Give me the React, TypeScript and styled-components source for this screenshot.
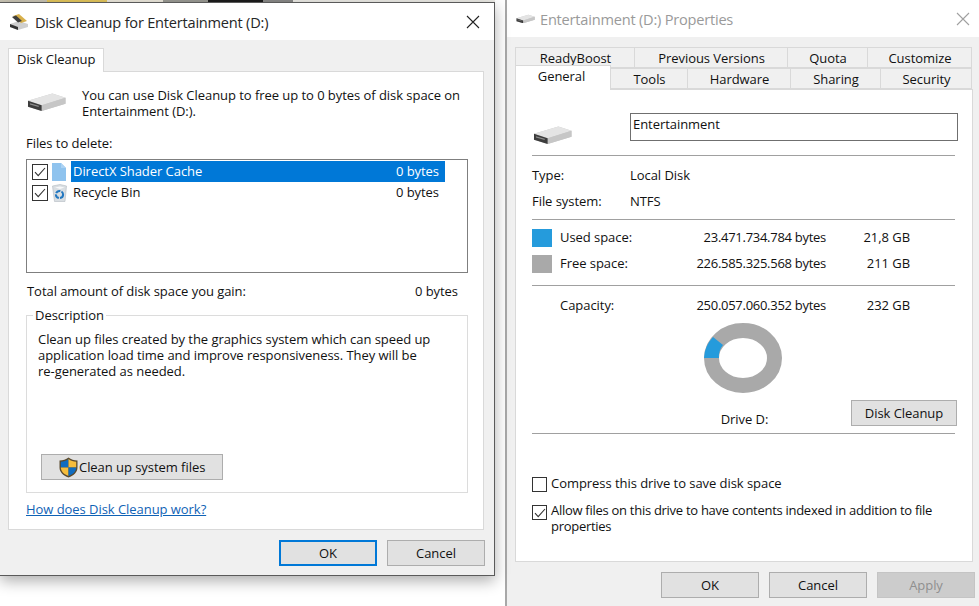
import React from "react";
import styled, { createGlobalStyle } from "styled-components";

const GlobalStyle = createGlobalStyle`
  html, body { margin: 0; padding: 0; background: #fff; }
  body {
    width: 979px;
    height: 606px;
    overflow: hidden;
    font-family: "Open Sans", "Noto Sans", sans-serif;
    font-size: 13px;
    letter-spacing: -0.05px;
    line-height: 16px;
    color: #111;
  }
`;

const Desktop = styled.div`
  position: relative;
  width: 979px;
  height: 606px;
  background: #fff;
  overflow: hidden;
`;

// strip of the wallpaper that shows above the front window
const Wallpaper = styled.div`
  height: 2px;
  width: 495px;
  background: linear-gradient(90deg, #c9c4b4 0 47px, #e4c65c 47px 107px, #ece8dc 107px 163px, #9b9b94 163px 208px, #1c1c1c 208px 263px, #8a8a88 263px 293px, #ecebe6 293px 495px);
`;

// windows sit on a free canvas, so these two are placed absolutely
const FrontWindow = styled.section`
  position: absolute;
  left: 0;
  top: 2px;
  width: 495px;
  height: 574px;
  box-sizing: border-box;
  display: flex;
  flex-direction: column;
  background: #f0f0f0;
  border: 1px solid #5a5a5a;
  border-left: 0;
  box-shadow: 0 5px 14px rgba(0, 0, 0, 0.32);
`;

const BackWindow = styled.section`
  position: absolute;
  left: 505px;
  top: 0;
  width: 474px;
  height: 606px;
  box-sizing: border-box;
  display: flex;
  flex-direction: column;
  background: #f0f0f0;
  border-left: 2px solid #a8a8a8;
`;

const TitleBar = styled.header<{ $pad: number }>`
  height: 37px;
  flex: none;
  display: flex;
  align-items: center;
  padding: 0 ${p => p.$pad}px 0 9px;
  background: #fff;
`;

const TitleText = styled.h1<{ $dim?: boolean }>`
  flex: 1;
  margin: 0;
  font-size: 14.6px;
  font-weight: 400;
  letter-spacing: -0.22px;
  color: ${p => (p.$dim ? "#9a9a9a" : "#262626")};
`;

const TitleIcon = styled.span<{ $gap: number }>`
  display: flex;
  margin-right: ${p => p.$gap}px;
`;

const CloseGlyph = styled.svg<{ $dim?: boolean }>`
  width: 14px;
  height: 14px;
  stroke: ${p => (p.$dim ? "#a0a0a0" : "#222")};
  stroke-width: 1.1;
  fill: none;
`;

const FrontBody = styled.div`
  flex: 1;
  display: flex;
  flex-direction: column;
  padding: 8px 9px 8px 8px;
`;

const SingleTab = styled.div`
  box-sizing: border-box;
  width: 96px;
  height: 24px;
  margin-bottom: -1px;
  padding-left: 8px;
  line-height: 20px;
  position: relative;
  z-index: 1;
  background: #fff;
  border: 1px solid #d9d9d9;
  border-bottom: 0;
`;

const Panel = styled.div`
  box-sizing: border-box;
  width: 476px;
  height: 459px;
  padding: 0 15px 0 17px;
  display: flex;
  flex-direction: column;
  background: #fff;
  border: 1px solid #d9d9d9;
`;

const IntroRow = styled.div`
  display: flex;
  align-items: flex-start;
  margin-top: 15px;
  height: 33px;
`;

const IntroIcon = styled.div`
  width: 56px;
  padding: 5px 0 0 1px;
  box-sizing: border-box;
  flex: none;
`;

const IntroCopy = styled.p`
  margin: 0;
  width: 390px;
`;

const Label = styled.div`
  margin-top: 15px;
  height: 16px;
`;

const FileList = styled.div`
  box-sizing: border-box;
  width: 442px;
  height: 114px;
  margin-top: 8px;
  padding: 1px 5px;
  border: 1px solid #7f7f7f;
`;

const FileRow = styled.div`
  display: flex;
  align-items: center;
  height: 21px;
`;

const FileIconSlot = styled.span`
  width: 23px;
  flex: none;
  display: flex;
  justify-content: center;
  padding-right: 1px;
  box-sizing: border-box;
`;

const FileText = styled.div<{ $on?: boolean }>`
  box-sizing: border-box;
  width: 374px;
  height: 21px;
  display: flex;
  justify-content: space-between;
  align-items: center;
  padding: 0 6px 2px 2px;
  background: ${p => (p.$on ? "#0078d7" : "transparent")};
  color: ${p => (p.$on ? "#fff" : "#111")};
`;

const Box = styled.span`
  box-sizing: border-box;
  width: 16px;
  height: 16px;
  flex: none;
  display: flex;
  align-items: center;
  justify-content: center;
  background: #fff;
  border: 1px solid #333;
`;

const OptionBox = styled(Box)<{ $top: number }>`
  width: 15px;
  height: 15px;
  margin-top: ${p => p.$top}px;
`;

const TotalRow = styled.div`
  display: flex;
  justify-content: space-between;
  width: 431px;
  margin: 10px 0 0 1px;
`;

const DescriptionBox = styled.fieldset`
  box-sizing: border-box;
  width: 442px;
  height: 186px;
  margin: 8px 0 0;
  padding: 8px 11px 0;
  min-width: 0;
  display: flex;
  flex-direction: column;
  border: 1px solid #dcdcdc;
`;

const Legend = styled.legend`
  margin: 0 auto 0 -5px;
  padding: 0 2px;
`;

const DescriptionCopy = styled.p`
  margin: 0;
  width: 394px;
  height: 123px;
`;

const WinButton = styled.button<{ $w: number; $off?: boolean; $focus?: boolean }>`
  box-sizing: border-box;
  width: ${p => p.$w}px;
  height: 26px;
  flex: none;
  padding: 0;
  display: inline-flex;
  align-items: center;
  justify-content: center;
  font: inherit;
  letter-spacing: inherit;
  color: ${p => (p.$off ? "#8f8f8f" : "#111")};
  background: ${p => (p.$off ? "#cccccc" : "#e1e1e1")};
  border: ${p => (p.$focus ? "2px solid #0078d7" : p.$off ? "1px solid #c4c4c4" : "1px solid #adadad")};
`;

const SystemButton = styled(WinButton)`
  justify-content: flex-start;
  padding-left: 17px;
  gap: 1px;
  margin-left: 3px;
`;

const HelpLink = styled.a`
  margin-top: 8px;
  color: #0f62b5;
  text-decoration: underline;
`;

const ButtonRow = styled.footer<{ $pr: number }>`
  display: flex;
  justify-content: flex-end;
  gap: 10px;
  padding: 10px ${p => p.$pr}px 0 0;
`;

const TabRows = styled.div`
  margin: 10px 0 0 8px;
  display: flex;
  flex-direction: column;
  width: 457px;
`;

const TabLine = styled.div`
  display: flex;
  height: 21px;
`;

const PropTab = styled.div<{ $w: number; $active?: boolean; $first?: boolean }>`
  box-sizing: border-box;
  width: ${p => p.$w}px;
  padding-left: 1px;
  text-align: center;
  line-height: ${p => (p.$active ? "20px" : "21px")};
  background: ${p => (p.$active ? "#fff" : "#f0f0f0")};
  border: 1px solid #d9d9d9;
  border-left-width: ${p => (p.$active || p.$first ? 1 : 0)}px;
  border-bottom: ${p => (p.$active ? "0" : "1px solid #d9d9d9")};
  ${p => p.$active && "height: 25px; margin-top: -3px; position: relative; z-index: 1; padding-right: 4px;"}
`;

const PropPanel = styled.div`
  box-sizing: border-box;
  width: 458px;
  height: 473px;
  margin: 0 0 0 8px;
  padding: 0 15px 0 16px;
  display: flex;
  flex-direction: column;
  background: #fff;
  border: 1px solid #d9d9d9;
`;

const NameRow = styled.div`
  display: flex;
  align-items: flex-start;
  height: 66px;
  padding-top: 23px;
  box-sizing: border-box;
  border-bottom: 1px solid #a0a0a0;
  width: 423px;
`;

const NameIcon = styled.div`
  width: 98px;
  flex: none;
  padding: 12px 0 0 1px;
  box-sizing: border-box;
`;

const NameInput = styled.div`
  box-sizing: border-box;
  width: 328px;
  height: 28px;
  flex: none;
  padding: 2px 0 0 2px;
  border: 1px solid #6f6f6f;
`;

const InfoBlock = styled.dl`
  margin: 0;
  height: 64px;
  padding-top: 6px;
  box-sizing: border-box;
  width: 423px;
  border-bottom: 1px solid #a0a0a0;
`;

const InfoRow = styled.div`
  display: grid;
  grid-template-columns: 98px 1fr;
  height: 26px;
  align-items: center;
`;

const InfoTerm = styled.dt`
  margin: 0;
`;

const InfoValue = styled.dd`
  margin: 0;
`;

const SpaceBlock = styled.div`
  box-sizing: border-box;
  width: 423px;
  height: 66px;
  padding-top: 4px;
  border-bottom: 1px solid #a0a0a0;
`;

const SpaceRow = styled.div`
  display: grid;
  grid-template-columns: 28px 128px 138px 84px;
  height: 26px;
  align-items: center;
`;

const Swatch = styled.span<{ $c: string }>`
  width: 20px;
  height: 18px;
  margin-top: 2px;
  background: ${p => p.$c};
`;

const Num = styled.span<{ $tight?: boolean }>`
  text-align: right;
  white-space: nowrap;
  letter-spacing: ${p => (p.$tight ? "-0.28px" : "inherit")};
`;

const CapacityBlock = styled.div`
  box-sizing: border-box;
  width: 423px;
  height: 148px;
  padding-top: 6px;
  border-bottom: 1px solid #a0a0a0;
  display: flex;
  flex-direction: column;
`;

const ChartRow = styled.div`
  display: grid;
  grid-template-columns: 172px 78px 1fr;
  margin-top: 5px;
`;

const ChartCell = styled.div`
  grid-column: 2;
  display: flex;
  flex-direction: column;
  align-items: center;
`;

const DriveCaption = styled.span`
  margin: 18px 0 0 3px;
  white-space: nowrap;
`;

const CleanupCell = styled.div`
  display: flex;
  justify-content: flex-end;
  align-items: flex-end;
  margin-right: -2px;
  padding-bottom: 1px;
`;

const OptionList = styled.div`
  display: flex;
  flex-direction: column;
  gap: 10px;
  margin-top: 41px;
`;

const Option = styled.label`
  display: flex;
  align-items: flex-start;
  gap: 4px;
  width: 420px;
`;

const OptionText = styled.span<{ $tight?: boolean }>`
  flex: 1;
  letter-spacing: ${p => (p.$tight ? "-0.28px" : "inherit")};
`;

const IconSvg = styled.svg`
  display: block;
`;

const Check = () => (
  <svg width="12" height="10" viewBox="0 0 12 10" fill="none" stroke="#333" strokeWidth="1.1">
    <path d="M1 5.2 4.2 8.6 11 1" />
  </svg>
);

const Close = ({ dim }: { dim?: boolean }) => (
  <CloseGlyph $dim={dim} viewBox="0 0 14 14">
    <path d="M1 1 13 13M13 1 1 13" />
  </CloseGlyph>
);

const DriveIcon = ({ w = 39 }: { w?: number }) => (
  <IconSvg width={w} height={w * 0.5} viewBox="0 0 40 20">
    <path d="M1 9 26 1.5 39.5 6 39.5 12 15 19.5 1 15z" fill="#c9c9c9" />
    <path d="M1 9 26 1.5 39.5 6 15 13.5z" fill="#e4e4e4" />
    <path d="M15 13.5 39.5 6 39.5 12 15 19.5z" fill="#c6c6c6" />
    <path d="M1 9 15 13.5 15 19.5 1 15z" fill="#3c3c3c" />
    <path d="M3 11.5 12 14.2 12 15.5 3 12.8z" fill="#8d8d8d" />
  </IconSvg>
);

const CleanupIcon = () => (
  <IconSvg width="20" height="18" viewBox="0 0 20 18">
    <path d="M1 11 10 8 19 11 19 14 9 17 1 14z" fill="#cfcfcf" />
    <path d="M1 11 9 14 9 17 1 14z" fill="#333" />
    <path d="M4 3 10 1 18 8 12 10z" fill="#d8b04a" />
    <path d="M3 4 7 2.5 13 8 9 9.5z" fill="#3d3d3d" />
  </IconSvg>
);

const FileIcon = () => (
  <svg width="14" height="18" viewBox="0 0 14 18">
    <path d="M0 0H9L14 5V18H0z" fill="#8fc3ee" />
    <path d="M9 0 14 5H9z" fill="#abd2f3" />
  </svg>
);

const BinIcon = () => (
  <svg width="15" height="18" viewBox="0 0 15 18">
    <path d="M0.5 2 8 0.5 14.5 2 13 17.5H2.5z" fill="#d9dee2" stroke="#b4bbc1" strokeWidth="0.6" />
    <path d="M3 3.5 8 2.5 12.5 3.5 8 5z" fill="#f7f8f9" />
    <circle cx="7.5" cy="10.5" r="3.6" fill="none" stroke="#2277c0" strokeWidth="2" strokeDasharray="5 1.2" />
  </svg>
);

const ShieldIcon = () => (
  <svg width="19" height="21" viewBox="0 0 19 21">
    <path d="M9.5 0.5C12 2.6 15 3.5 18.5 3.6V10.5C18.5 15 15 18.5 9.5 20.5 4 18.5 0.5 15 0.5 10.5V3.6C4 3.5 7 2.6 9.5 0.5z" fill="#5b4a2e" />
    <path d="M9.5 2C7.2 3.8 4.5 4.6 1.8 4.8V10.5H9.5z" fill="#0f6cc0" />
    <path d="M9.5 2V10.5H17.2V4.8C14.5 4.6 11.8 3.8 9.5 2z" fill="#f6bd3c" />
    <path d="M1.8 10.5C2 14.5 5 17.4 9.5 19V10.5z" fill="#f6bd3c" />
    <path d="M9.5 10.5V19C14 17.4 17 14.5 17.2 10.5z" fill="#0f6cc0" />
  </svg>
);

// used share drawn as one wedge of the flattened ring
const DonutChart = () => (
  <IconSvg width="78" height="70" viewBox="0 0 78 70">
    <ellipse cx="39" cy="35" rx="31.5" ry="27.5" fill="none" stroke="#a9a9a9" strokeWidth="15" />
    <path d="M0 35A39 35 0 0 1 9 14L19 22A24 20 0 0 0 15 35z" fill="#259bdc" />
  </IconSvg>
);

export default function App() {
  return (
    <Desktop>
      <GlobalStyle />
      <Wallpaper />

      <BackWindow>
        <TitleBar $pad={9}>
          <TitleIcon $gap={5}>
            <DriveIcon w={19} />
          </TitleIcon>
          <TitleText $dim>Entertainment (D:) Properties</TitleText>
          <Close dim />
        </TitleBar>
        <TabRows>
          <TabLine>
            <PropTab $w={120} $first>ReadyBoost</PropTab>
            <PropTab $w={153}>Previous Versions</PropTab>
            <PropTab $w={80}>Quota</PropTab>
            <PropTab $w={104}>Customize</PropTab>
          </TabLine>
          <TabLine>
            <PropTab $w={96} $active>General</PropTab>
            <PropTab $w={77}>Tools</PropTab>
            <PropTab $w={103}>Hardware</PropTab>
            <PropTab $w={90}>Sharing</PropTab>
            <PropTab $w={91}>Security</PropTab>
          </TabLine>
        </TabRows>
        <PropPanel>
          <NameRow>
            <NameIcon>
              <DriveIcon />
            </NameIcon>
            <NameInput>Entertainment</NameInput>
          </NameRow>
          <InfoBlock>
            <InfoRow>
              <InfoTerm>Type:</InfoTerm>
              <InfoValue>Local Disk</InfoValue>
            </InfoRow>
            <InfoRow>
              <InfoTerm>File system:</InfoTerm>
              <InfoValue>NTFS</InfoValue>
            </InfoRow>
          </InfoBlock>
          <SpaceBlock>
            <SpaceRow>
              <Swatch $c="#259bdc" />
              <span>Used space:</span>
              <Num $tight>23.471.734.784 bytes</Num>
              <Num>21,8 GB</Num>
            </SpaceRow>
            <SpaceRow>
              <Swatch $c="#a9a9a9" />
              <span>Free space:</span>
              <Num $tight>226.585.325.568 bytes</Num>
              <Num>211 GB</Num>
            </SpaceRow>
          </SpaceBlock>
          <CapacityBlock>
            <SpaceRow>
              <span />
              <span>Capacity:</span>
              <Num $tight>250.057.060.352 bytes</Num>
              <Num>232 GB</Num>
            </SpaceRow>
            <ChartRow>
              <span />
              <ChartCell>
                <DonutChart />
                <DriveCaption>Drive D:</DriveCaption>
              </ChartCell>
              <CleanupCell>
                <WinButton $w={106}>Disk Cleanup</WinButton>
              </CleanupCell>
            </ChartRow>
          </CapacityBlock>
          <OptionList>
            <Option>
              <OptionBox $top={2} />
              <OptionText>Compress this drive to save disk space</OptionText>
            </Option>
            <Option>
              <OptionBox $top={3}>
                <Check />
              </OptionBox>
              <OptionText $tight>Allow files on this drive to have contents indexed in addition to file properties</OptionText>
            </Option>
          </OptionList>
        </PropPanel>
        <ButtonRow $pr={4}>
          <WinButton $w={98}>OK</WinButton>
          <WinButton $w={98}>Cancel</WinButton>
          <WinButton $w={98} $off>Apply</WinButton>
        </ButtonRow>
      </BackWindow>

      <FrontWindow>
        <TitleBar $pad={14}>
          <TitleIcon $gap={6}>
            <CleanupIcon />
          </TitleIcon>
          <TitleText>Disk Cleanup for Entertainment (D:)</TitleText>
          <Close />
        </TitleBar>
        <FrontBody>
          <SingleTab>Disk Cleanup</SingleTab>
          <Panel>
            <IntroRow>
              <IntroIcon>
                <DriveIcon />
              </IntroIcon>
              <IntroCopy>You can use Disk Cleanup to free up to 0 bytes of disk space on Entertainment (D:).</IntroCopy>
            </IntroRow>
            <Label>Files to delete:</Label>
            <FileList>
              <FileRow>
                <Box>
                  <Check />
                </Box>
                <FileIconSlot>
                  <FileIcon />
                </FileIconSlot>
                <FileText $on>
                  <span>DirectX Shader Cache</span>
                  <span>0 bytes</span>
                </FileText>
              </FileRow>
              <FileRow>
                <Box>
                  <Check />
                </Box>
                <FileIconSlot>
                  <BinIcon />
                </FileIconSlot>
                <FileText>
                  <span>Recycle Bin</span>
                  <span>0 bytes</span>
                </FileText>
              </FileRow>
            </FileList>
            <TotalRow>
              <span>Total amount of disk space you gain:</span>
              <span>0 bytes</span>
            </TotalRow>
            <DescriptionBox>
              <Legend>Description</Legend>
              <DescriptionCopy>
                Clean up files created by the graphics system which can speed up application load time and improve responsiveness. They will be re-generated as needed.
              </DescriptionCopy>
              <SystemButton $w={182}>
                <ShieldIcon />
                Clean up system files
              </SystemButton>
            </DescriptionBox>
            <HelpLink href="#">How does Disk Cleanup work?</HelpLink>
          </Panel>
          <ButtonRow $pr={0}>
            <WinButton $w={98} $focus>OK</WinButton>
            <WinButton $w={98}>Cancel</WinButton>
          </ButtonRow>
        </FrontBody>
      </FrontWindow>
    </Desktop>
  );
}
